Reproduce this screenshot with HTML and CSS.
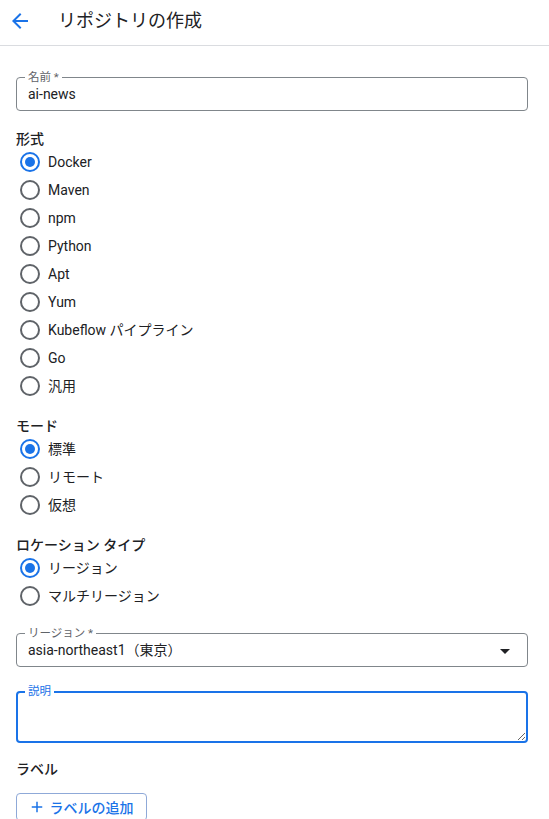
FILE: index.html
```html
<!DOCTYPE html>
<html lang="ja">
<head>
<meta charset="utf-8">
<link rel="stylesheet" href="styles.css">
</head>
<body>
<header class="topbar">
  <svg class="back" width="24" height="24" viewBox="0 0 24 24"><path d="M20 11H7.83l5.59-5.59L12 4l-8 8 8 8 1.41-1.41L7.83 13H20v-2z" fill="#1a73e8"/></svg>
  <h1 class="title">リポジトリの作成</h1>
</header>
<main class="form">
  <div class="field">
    <span class="field-label">名前 *</span>
    <div class="field-value">ai-news</div>
  </div>

  <div class="group">
    <div class="group-label">形式</div>
    <label class="radio"><span class="dot checked"></span>Docker</label>
    <label class="radio"><span class="dot"></span>Maven</label>
    <label class="radio"><span class="dot"></span>npm</label>
    <label class="radio"><span class="dot"></span>Python</label>
    <label class="radio"><span class="dot"></span>Apt</label>
    <label class="radio"><span class="dot"></span>Yum</label>
    <label class="radio"><span class="dot"></span>Kubeflow パイプライン</label>
    <label class="radio"><span class="dot"></span>Go</label>
    <label class="radio"><span class="dot"></span>汎用</label>
  </div>

  <div class="group">
    <div class="group-label">モード</div>
    <label class="radio"><span class="dot checked"></span>標準</label>
    <label class="radio"><span class="dot"></span>リモート</label>
    <label class="radio"><span class="dot"></span>仮想</label>
  </div>

  <div class="group">
    <div class="group-label">ロケーション タイプ</div>
    <label class="radio"><span class="dot checked"></span>リージョン</label>
    <label class="radio"><span class="dot"></span>マルチリージョン</label>
  </div>

  <div class="field select-field">
    <span class="field-label">リージョン *</span>
    <div class="field-value">asia-northeast1（東京）</div>
    <svg class="caret" width="24" height="24" viewBox="0 0 24 24"><path d="M7 10l5 5 5-5z" fill="#202124"/></svg>
  </div>

  <div class="field focused">
    <span class="field-label">説明</span>
    <textarea class="desc"></textarea>
  </div>

  <div class="labels-title">ラベル</div>
  <button class="add-btn">
    <svg width="18" height="18" viewBox="0 0 24 24"><path d="M19 13h-6v6h-2v-6H5v-2h6V5h2v6h6v2z" fill="#1a73e8"/></svg>
    <span>ラベルの追加</span>
  </button>
</main>
</body>
</html>
```

FILE: styles.css
```css
* { box-sizing: border-box; }
body {
  margin: 0;
  font-family: Roboto, "Noto Sans CJK JP", sans-serif;
  color: #202124;
  background: #fff;
  font-size: 14px;
}
.topbar {
  height: 46px;
  border-bottom: 1px solid #dadce0;
  display: flex;
  align-items: center;
  padding: 0 0 4px 8px;
}
.back { flex: none; }
.title {
  margin: 0 0 0 26px;
  font-size: 18px;
  font-weight: 400;
  line-height: 24px;
}
.form {
  padding: 0 21px 0 16px;
  display: flex;
  flex-direction: column;
}
.field {
  position: relative;
  margin-top: 31px;
  height: 34px;
  border: 1px solid #80868b;
  border-radius: 4px;
  padding: 0 11px;
  display: flex;
  align-items: center;
}
.field-label {
  position: absolute;
  top: -8px;
  left: 8px;
  padding: 0 3px;
  background: #fff;
  font-size: 11.5px;
  line-height: 14px;
  color: #5f6368;
}
.field-value {
  font-size: 14px;
  line-height: 20px;
}
.group { margin-top: 18px; display: flex; flex-direction: column; }
.group + .group { margin-top: 16px; }
.group-label {
  font-size: 14px;
  font-weight: 500;
  line-height: 20px;
  margin-bottom: -1px;
}
.radio {
  height: 28px;
  display: flex;
  align-items: center;
  padding-left: 4px;
  font-size: 14px;
  line-height: 20px;
}
.dot {
  width: 20px;
  height: 20px;
  border: 2px solid #5f6368;
  border-radius: 50%;
  margin-right: 8px;
  flex: none;
  position: relative;
}
.dot.checked { border-color: #1a73e8; }
.dot.checked::after {
  content: "";
  position: absolute;
  left: 3px; top: 3px;
  width: 10px; height: 10px;
  border-radius: 50%;
  background: #1a73e8;
}
.select-field { margin-top: 23px; }
.caret { position: absolute; right: 10px; top: 5px; }
.focused {
  margin-top: 24px;
  height: 52px;
  border: 2px solid #1a73e8;
  padding: 0;
}
.focused .field-label { color: #1a73e8; top: -9px; left: 7px; }
.desc {
  width: 100%;
  height: 100%;
  border: none;
  outline: none;
  resize: vertical;
  background: transparent;
  font: inherit;
  padding: 8px 10px;
}
.labels-title {
  margin-top: 16px;
  line-height: 20px;
  font-weight: 500;
}
.add-btn {
  margin-top: 14px;
  align-self: flex-start;
  height: 28px;
  width: 131px;
  border: 1px solid #8fa9d8;
  border-radius: 4px;
  background: #fff;
  color: #1a73e8;
  font-family: Roboto, "Noto Sans CJK JP", sans-serif;
  font-size: 14px;
  font-weight: 500;
  white-space: nowrap;
  display: flex;
  align-items: center;
  justify-content: center;
  gap: 4px;
  padding: 0 8px 0 6px;
}
.add-btn svg { flex: none; }
```
